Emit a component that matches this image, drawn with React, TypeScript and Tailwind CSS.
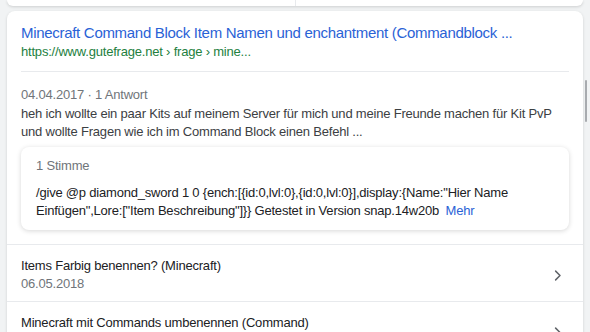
import React from "react";

const Chevron = () => (
  <svg className="w-[15px] h-[15px] text-[#5f6368]" viewBox="0 0 24 24" fill="none" stroke="currentColor" strokeWidth={2.4} strokeLinecap="round" strokeLinejoin="round">
    <path d="M9 5l7 7-7 7" />
  </svg>
);

const related = [
  { title: "Items Farbig benennen? (Minecraft)", date: "06.05.2018" },
  { title: "Minecraft mit Commands umbenennen (Command)", date: "12.03.2016" },
];

export default function App() {
  return (
    <div className="h-[332px] overflow-hidden bg-[#f1f3f4] font-['Liberation_Sans',Arial,sans-serif] relative">
      {/* previous card, mostly scrolled away */}
      <div className="mx-[7px] h-[6px] bg-white rounded-b-lg shadow-[0_1px_3px_rgba(0,0,0,0.15)] flex">
        <div className="flex-1 border-r border-[#e8eaed]" />
        <div className="flex-1" />
      </div>

      <div className="mx-[7px] mt-[5px] bg-white rounded-lg shadow-[0_1px_3px_rgba(0,0,0,0.15)]">
        <div className="px-[14px] pt-[12px]">
          <div className="text-[15px] leading-[20px] tracking-[-0.3px] text-[#2a62d6] whitespace-nowrap">
            Minecraft Command Block Item Namen und enchantment (Commandblock ...
          </div>
          <div className="text-[13px] leading-[18px] tracking-[-0.2px] text-[#23803e]">
            https://www.gutefrage.net › frage › mine...
          </div>
          <div className="border-t border-[#e8eaed] mt-[10px]" />
          <div className="text-[13px] leading-[18px] tracking-[-0.2px] text-[#70757a] mt-[14px]">04.04.2017 · 1 Antwort</div>
          <div className="text-[13px] leading-[18px] tracking-[-0.2px] text-[#3c4043] mt-[1px]">
            heh ich wollte ein paar Kits auf meinem Server für mich und meine Freunde machen für Kit PvP und wollte Fragen wie ich im Command Block einen Befehl ...
          </div>
          <div className="mt-[6px] mb-[14px] rounded-lg bg-white shadow-[0_1px_5px_rgba(0,0,0,0.16)] px-[15px] pt-[10px] pb-[10px]">
            <div className="text-[13px] leading-[18px] tracking-[-0.2px] text-[#70757a]">1 Stimme</div>
            <div className="text-[13px] leading-[18px] tracking-[-0.2px] text-[#202124] mt-[9px]">
              /give @p diamond_sword 1 0 {"{ench:[{id:0,lvl:0},{id:0,lvl:0}],display:{Name:\"Hier Name Einfügen\",Lore:[\"Item Beschreibung\"]}}"} Getestet in Version snap.14w20b{" "}
              <span className="text-[#2a62d6] ml-[3px]">Mehr</span>
            </div>
          </div>
        </div>
        {related.map((r) => (
          <div key={r.title} className="border-t border-[#e8eaed] pl-[14px] pr-[18px] pt-[12px] pb-[8px] flex items-center">
            <div className="flex-1">
              <div className="text-[13px] leading-[18px] tracking-[-0.2px] text-[#202124]">{r.title}</div>
              <div className="text-[13px] leading-[18px] tracking-[-0.2px] text-[#70757a]">{r.date}</div>
            </div>
            <Chevron />
          </div>
        ))}
      </div>

      {/* scroll indicator */}
      <div className="absolute right-[3px] top-[80px] w-[2px] h-[42px] rounded-full bg-[#a8abaf]" />
    </div>
  );
}
